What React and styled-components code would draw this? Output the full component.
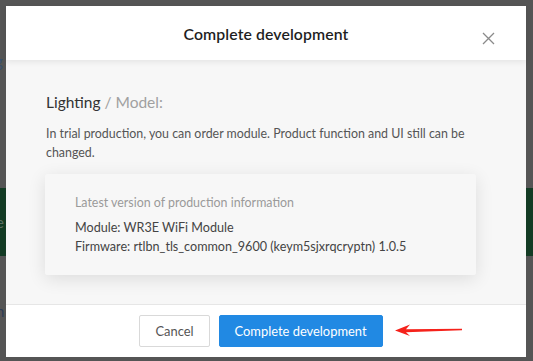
import React from 'react';
import styled, { createGlobalStyle } from 'styled-components';

const GlobalStyle = createGlobalStyle`
  html, body {
    margin: 0;
    padding: 0;
    background: #555555;
    font-family: Lato, "Open Sans", Arial, sans-serif;
    overflow: hidden;
  }
`;

// page left behind the dim overlay
const Backdrop = styled.div`
  width: 533px;
  height: 361px;
  display: flex;
  flex-direction: column;
  padding-top: 52px;
  box-sizing: border-box;
`;

const BackLink = styled.div`
  font-size: 15px;
  color: #37506d;
  margin-left: -5px;
  text-decoration: underline;
`;

const BackBlock = styled.div`
  margin-top: 118px;
  height: 68px;
  background: #133b24;
  color: #5d6f62;
  font-size: 15px;
  display: flex;
  align-items: center;
  text-indent: -4px;
`;

const BackLine = styled.div`
  margin-top: 46px;
  font-size: 15px;
  color: #2c3c55;
  text-indent: -4px;
`;

const Modal = styled.div`
  position: absolute;
  left: 6px;
  top: 6px;
  width: 520px;
  height: 351px;
  background: #ffffff;
  display: flex;
  flex-direction: column;
`;

const Header = styled.div`
  position: relative;
  z-index: 1;
  height: 54px;
  flex: none;
  display: flex;
  align-items: center;
  justify-content: center;
  box-shadow: 0 2px 6px rgba(0, 0, 0, 0.08);
`;

const Title = styled.h3`
  margin: 0;
  font-size: 15.8px;
  font-weight: 600;
  color: #1f1f1f;
  letter-spacing: 0.1px;
`;

const Close = styled.button`
  position: absolute;
  right: 31px;
  top: 26px;
  width: 13px;
  height: 13px;
  padding: 0;
  border: 0;
  background: none;
  display: flex;
`;

const Body = styled.div`
  flex: 1;
  background: #f7f7f7;
  padding: 32px 50px 0 40px;
  border-bottom: 1px solid #e6e6e6;
`;

const Crumb = styled.div`
  font-size: 15.5px;
  color: #333;
  line-height: 20px;

  span {
    color: #a0a0a0;
  }
`;

const Note = styled.p`
  margin: 12px 0 0;
  font-size: 12.4px;
  line-height: 19px;
  color: #555;
`;

const InfoCard = styled.div`
  margin-top: 12px;
  margin-left: -1px;
  background: #f7f7f7;
  border-radius: 2px;
  box-shadow: 0 4px 18px rgba(0, 0, 0, 0.11);
  padding: 20px 30px 19px;
`;

const InfoLabel = styled.div`
  font-size: 12.4px;
  line-height: 18px;
  color: #9a9a9a;
  margin-bottom: 6px;
`;

const InfoLine = styled.div`
  font-size: 12.6px;
  line-height: 19px;
  color: #444;
`;

const Footer = styled.div`
  position: relative;
  height: 52px;
  flex: none;
  display: flex;
  align-items: center;
  justify-content: center;
  gap: 9px;
  padding-right: 10px;
`;

const Button = styled.button`
  height: 32px;
  padding: 0 ${p => (p.$primary ? '15px' : '15px')};
  border-radius: 2px;
  font-family: inherit;
  font-size: 12.9px;
  border: 1px solid ${p => (p.$primary ? '#2189e3' : '#d9d9d9')};
  background: ${p => (p.$primary ? '#2189e3' : '#fff')};
  color: ${p => (p.$primary ? '#fff' : '#555')};
`;

const Arrow = styled.svg`
  position: absolute;
  left: 388px;
  top: 18px;
`;

export default function App() {
  return (
    <>
      <GlobalStyle />
      <Backdrop>
        <BackLink>g</BackLink>
        <BackBlock>e</BackBlock>
        <BackLine>h</BackLine>
      </Backdrop>
      <Modal>
        <Header>
          <Title>Complete development</Title>
          <Close aria-label="close">
            <svg width="13" height="13" viewBox="0 0 13 13">
              <path d="M1 1L12 12M12 1L1 12" stroke="#8a8a8a" strokeWidth="1.3" />
            </svg>
          </Close>
        </Header>
        <Body>
          <Crumb>
            Lighting <span>/ Model:</span>
          </Crumb>
          <Note>
            In trial production, you can order module. Product function and UI still can be changed.
          </Note>
          <InfoCard>
            <InfoLabel>Latest version of production information</InfoLabel>
            <InfoLine>Module: WR3E WiFi Module</InfoLine>
            <InfoLine>Firmware: rtlbn_tls_common_9600 (keym5sjxrqcryptn) 1.0.5</InfoLine>
          </InfoCard>
        </Body>
        <Footer>
          <Button>Cancel</Button>
          <Button $primary>Complete development</Button>
          <Arrow width="70" height="14" viewBox="0 0 70 14">
            <path d="M1 7.5L16 1.5L12 6.2L68 5.8L68 7.2L12 9.2L16 13Z" fill="#f5221b" />
          </Arrow>
        </Footer>
      </Modal>
    </>
  );
}
